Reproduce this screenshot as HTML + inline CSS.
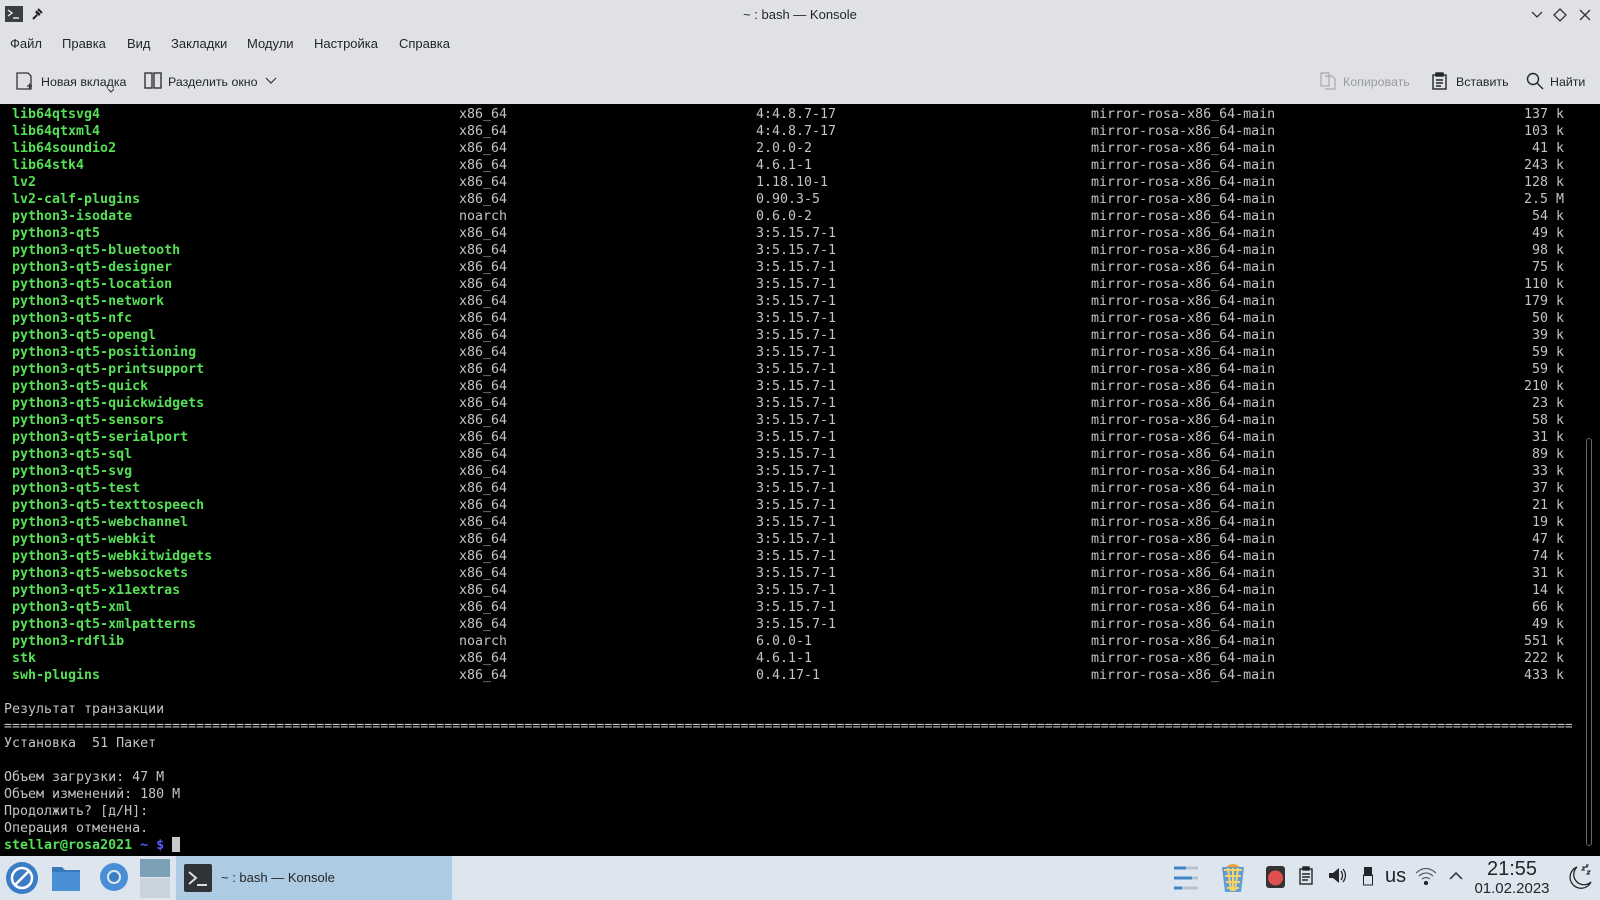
<!DOCTYPE html>
<html><head><meta charset="utf-8"><style>
*{margin:0;padding:0;box-sizing:border-box}
body{width:1600px;height:900px;overflow:hidden;background:#000;font-family:"Liberation Sans","DejaVu Sans",sans-serif;position:relative}
#top{position:absolute;left:0;top:0;width:1600px;height:104px;background:#dfe1e4;color:#232629;font-size:13px}
#top .t{position:absolute}
#term{position:absolute;left:0;top:106px;width:1600px;height:750px;background:#000;font-family:"DejaVu Sans Mono","Liberation Mono",monospace;font-size:13.3px;color:#c4c4c4}
.r{position:absolute;left:0;height:17px;line-height:17px;width:1600px;white-space:pre}
.r span{position:absolute}
.n{left:12px;color:#55e055;font-weight:bold}
.a{left:459px}.v{left:756px}.p{left:1091px}.s{right:36px}
#tb{position:absolute;left:0;top:856px;width:1600px;height:44px;background:#dde6ee}
.tbt{font-size:12.4px}
</style></head><body>
<div style="position:absolute;left:0;top:104px;width:1600px;height:2px;background:#000"></div>
<div id="top">
 <svg class="t" style="left:5px;top:6px" width="18" height="16"><rect width="18" height="16" fill="#3b3f44"/><path d="M3 4l4 3-4 3" stroke="#eee" fill="none" stroke-width="1.4"/><path d="M8 12h6" stroke="#eee" stroke-width="1.4"/></svg>
 <svg class="t" style="left:31px;top:7px" width="13" height="13"><path d="M2 12l4-4M5 4l4 4M7 2l4 4M5 5l3 3" stroke="#222" stroke-width="2"/></svg>
 <div class="t" style="left:0;width:1600px;top:7px;text-align:center;font-size:13px">~ : bash — Konsole</div>
 <svg class="t" style="left:1530px;top:8px" width="64" height="14" fill="none" stroke="#333" stroke-width="1.3"><path d="M2 4l5 5 5-5"/><path d="M30 1l6 6-6 6-6-6z"/><path d="M50 2l10 10M60 2l-10 10"/></svg>
 <div class="t" style="left:10px;top:36px">Файл</div>
 <div class="t" style="left:62px;top:36px">Правка</div>
 <div class="t" style="left:127px;top:36px">Вид</div>
 <div class="t" style="left:171px;top:36px">Закладки</div>
 <div class="t" style="left:247px;top:36px">Модули</div>
 <div class="t" style="left:314px;top:36px">Настройка</div>
 <div class="t" style="left:399px;top:36px">Справка</div>
 <svg class="t" style="left:16px;top:72px" width="18" height="18" fill="none" stroke="#333" stroke-width="1.3"><path d="M1 1h11l3 3v13H1z"/><path d="M11 14h5M13.5 11.5v5"/></svg>
 <div class="t tbt" style="left:41px;top:75px">Новая вкладка</div>
 <svg class="t" style="left:108px;top:89px" width="6" height="4"><path d="M0 0l3 3 3-3" stroke="#333" fill="none"/></svg>
 <svg class="t" style="left:144px;top:72px" width="18" height="17" fill="none" stroke="#333" stroke-width="1.4"><rect x="1" y="1" width="7" height="15"/><rect x="10" y="1" width="7" height="15"/></svg>
 <div class="t tbt" style="left:168px;top:75px">Разделить окно</div>
 <svg class="t" style="left:265px;top:77px" width="12" height="8"><path d="M1 1l5 5 5-5" stroke="#333" fill="none" stroke-width="1.2"/></svg>
 <svg class="t" style="left:1320px;top:72px" width="16" height="18" fill="none" stroke="#aaa" stroke-width="1.2"><path d="M1 1h8v13H1zM5 4h7l3 3v10H5"/></svg>
 <div class="t tbt" style="left:1343px;top:75px;color:#9a9c9e">Копировать</div>
 <svg class="t" style="left:1432px;top:72px" width="15" height="18" fill="none" stroke="#232629" stroke-width="1.4"><rect x="1" y="3" width="13" height="14"/><rect x="4" y="1" width="7" height="3" fill="#232629"/><path d="M4 8h7M4 11h7M4 14h5"/></svg>
 <div class="t tbt" style="left:1456px;top:75px">Вставить</div>
 <svg class="t" style="left:1526px;top:72px" width="18" height="18" fill="none" stroke="#232629" stroke-width="1.4"><circle cx="7" cy="7" r="5.5"/><path d="M11 11l6 6"/></svg>
 <div class="t tbt" style="left:1550px;top:75px">Найти</div>
</div>
<div id="term">
<div class="r" style="top:0"><span class="n">lib64qtsvg4</span><span class="a">x86_64</span><span class="v">4:4.8.7-17</span><span class="p">mirror-rosa-x86_64-main</span><span class="s">137 k</span></div>
<div class="r" style="top:17px"><span class="n">lib64qtxml4</span><span class="a">x86_64</span><span class="v">4:4.8.7-17</span><span class="p">mirror-rosa-x86_64-main</span><span class="s">103 k</span></div>
<div class="r" style="top:34px"><span class="n">lib64soundio2</span><span class="a">x86_64</span><span class="v">2.0.0-2</span><span class="p">mirror-rosa-x86_64-main</span><span class="s">41 k</span></div>
<div class="r" style="top:51px"><span class="n">lib64stk4</span><span class="a">x86_64</span><span class="v">4.6.1-1</span><span class="p">mirror-rosa-x86_64-main</span><span class="s">243 k</span></div>
<div class="r" style="top:68px"><span class="n">lv2</span><span class="a">x86_64</span><span class="v">1.18.10-1</span><span class="p">mirror-rosa-x86_64-main</span><span class="s">128 k</span></div>
<div class="r" style="top:85px"><span class="n">lv2-calf-plugins</span><span class="a">x86_64</span><span class="v">0.90.3-5</span><span class="p">mirror-rosa-x86_64-main</span><span class="s">2.5 M</span></div>
<div class="r" style="top:102px"><span class="n">python3-isodate</span><span class="a">noarch</span><span class="v">0.6.0-2</span><span class="p">mirror-rosa-x86_64-main</span><span class="s">54 k</span></div>
<div class="r" style="top:119px"><span class="n">python3-qt5</span><span class="a">x86_64</span><span class="v">3:5.15.7-1</span><span class="p">mirror-rosa-x86_64-main</span><span class="s">49 k</span></div>
<div class="r" style="top:136px"><span class="n">python3-qt5-bluetooth</span><span class="a">x86_64</span><span class="v">3:5.15.7-1</span><span class="p">mirror-rosa-x86_64-main</span><span class="s">98 k</span></div>
<div class="r" style="top:153px"><span class="n">python3-qt5-designer</span><span class="a">x86_64</span><span class="v">3:5.15.7-1</span><span class="p">mirror-rosa-x86_64-main</span><span class="s">75 k</span></div>
<div class="r" style="top:170px"><span class="n">python3-qt5-location</span><span class="a">x86_64</span><span class="v">3:5.15.7-1</span><span class="p">mirror-rosa-x86_64-main</span><span class="s">110 k</span></div>
<div class="r" style="top:187px"><span class="n">python3-qt5-network</span><span class="a">x86_64</span><span class="v">3:5.15.7-1</span><span class="p">mirror-rosa-x86_64-main</span><span class="s">179 k</span></div>
<div class="r" style="top:204px"><span class="n">python3-qt5-nfc</span><span class="a">x86_64</span><span class="v">3:5.15.7-1</span><span class="p">mirror-rosa-x86_64-main</span><span class="s">50 k</span></div>
<div class="r" style="top:221px"><span class="n">python3-qt5-opengl</span><span class="a">x86_64</span><span class="v">3:5.15.7-1</span><span class="p">mirror-rosa-x86_64-main</span><span class="s">39 k</span></div>
<div class="r" style="top:238px"><span class="n">python3-qt5-positioning</span><span class="a">x86_64</span><span class="v">3:5.15.7-1</span><span class="p">mirror-rosa-x86_64-main</span><span class="s">59 k</span></div>
<div class="r" style="top:255px"><span class="n">python3-qt5-printsupport</span><span class="a">x86_64</span><span class="v">3:5.15.7-1</span><span class="p">mirror-rosa-x86_64-main</span><span class="s">59 k</span></div>
<div class="r" style="top:272px"><span class="n">python3-qt5-quick</span><span class="a">x86_64</span><span class="v">3:5.15.7-1</span><span class="p">mirror-rosa-x86_64-main</span><span class="s">210 k</span></div>
<div class="r" style="top:289px"><span class="n">python3-qt5-quickwidgets</span><span class="a">x86_64</span><span class="v">3:5.15.7-1</span><span class="p">mirror-rosa-x86_64-main</span><span class="s">23 k</span></div>
<div class="r" style="top:306px"><span class="n">python3-qt5-sensors</span><span class="a">x86_64</span><span class="v">3:5.15.7-1</span><span class="p">mirror-rosa-x86_64-main</span><span class="s">58 k</span></div>
<div class="r" style="top:323px"><span class="n">python3-qt5-serialport</span><span class="a">x86_64</span><span class="v">3:5.15.7-1</span><span class="p">mirror-rosa-x86_64-main</span><span class="s">31 k</span></div>
<div class="r" style="top:340px"><span class="n">python3-qt5-sql</span><span class="a">x86_64</span><span class="v">3:5.15.7-1</span><span class="p">mirror-rosa-x86_64-main</span><span class="s">89 k</span></div>
<div class="r" style="top:357px"><span class="n">python3-qt5-svg</span><span class="a">x86_64</span><span class="v">3:5.15.7-1</span><span class="p">mirror-rosa-x86_64-main</span><span class="s">33 k</span></div>
<div class="r" style="top:374px"><span class="n">python3-qt5-test</span><span class="a">x86_64</span><span class="v">3:5.15.7-1</span><span class="p">mirror-rosa-x86_64-main</span><span class="s">37 k</span></div>
<div class="r" style="top:391px"><span class="n">python3-qt5-texttospeech</span><span class="a">x86_64</span><span class="v">3:5.15.7-1</span><span class="p">mirror-rosa-x86_64-main</span><span class="s">21 k</span></div>
<div class="r" style="top:408px"><span class="n">python3-qt5-webchannel</span><span class="a">x86_64</span><span class="v">3:5.15.7-1</span><span class="p">mirror-rosa-x86_64-main</span><span class="s">19 k</span></div>
<div class="r" style="top:425px"><span class="n">python3-qt5-webkit</span><span class="a">x86_64</span><span class="v">3:5.15.7-1</span><span class="p">mirror-rosa-x86_64-main</span><span class="s">47 k</span></div>
<div class="r" style="top:442px"><span class="n">python3-qt5-webkitwidgets</span><span class="a">x86_64</span><span class="v">3:5.15.7-1</span><span class="p">mirror-rosa-x86_64-main</span><span class="s">74 k</span></div>
<div class="r" style="top:459px"><span class="n">python3-qt5-websockets</span><span class="a">x86_64</span><span class="v">3:5.15.7-1</span><span class="p">mirror-rosa-x86_64-main</span><span class="s">31 k</span></div>
<div class="r" style="top:476px"><span class="n">python3-qt5-x11extras</span><span class="a">x86_64</span><span class="v">3:5.15.7-1</span><span class="p">mirror-rosa-x86_64-main</span><span class="s">14 k</span></div>
<div class="r" style="top:493px"><span class="n">python3-qt5-xml</span><span class="a">x86_64</span><span class="v">3:5.15.7-1</span><span class="p">mirror-rosa-x86_64-main</span><span class="s">66 k</span></div>
<div class="r" style="top:510px"><span class="n">python3-qt5-xmlpatterns</span><span class="a">x86_64</span><span class="v">3:5.15.7-1</span><span class="p">mirror-rosa-x86_64-main</span><span class="s">49 k</span></div>
<div class="r" style="top:527px"><span class="n">python3-rdflib</span><span class="a">noarch</span><span class="v">6.0.0-1</span><span class="p">mirror-rosa-x86_64-main</span><span class="s">551 k</span></div>
<div class="r" style="top:544px"><span class="n">stk</span><span class="a">x86_64</span><span class="v">4.6.1-1</span><span class="p">mirror-rosa-x86_64-main</span><span class="s">222 k</span></div>
<div class="r" style="top:561px"><span class="n">swh-plugins</span><span class="a">x86_64</span><span class="v">0.4.17-1</span><span class="p">mirror-rosa-x86_64-main</span><span class="s">433 k</span></div>
<div class="r" style="top:595px;left:4px">Результат транзакции</div>
<div class="r" style="top:612px;left:4px;width:1568px;overflow:hidden">====================================================================================================================================================================================================</div>
<div class="r" style="top:629px;left:4px">Установка  51 Пакет</div>
<div class="r" style="top:663px;left:4px">Объем загрузки: 47 M</div>
<div class="r" style="top:680px;left:4px">Объем изменений: 180 M</div>
<div class="r" style="top:697px;left:4px">Продолжить? [д/Н]:</div>
<div class="r" style="top:714px;left:4px">Операция отменена.</div>
<div class="r" style="top:731px;left:4px;font-weight:bold"><b style="color:#55e055">stellar@rosa2021</b> <b style="color:#5a5aff">~ $</b> <i style="display:inline-block;width:8px;height:15px;background:#c8c8c8;vertical-align:-3px"></i></div>
<div style="position:absolute;left:1586px;top:332px;width:6px;height:408px;border:1px solid #666;border-radius:3px"></div>
</div>
<div id="tb">
 <svg style="position:absolute;left:5px;top:5px" width="34" height="34"><circle cx="17" cy="17" r="16" fill="#3b7cc4"/><circle cx="17" cy="17" r="10" fill="none" stroke="#fff" stroke-width="2.5"/><path d="M10 24L24 10" stroke="#fff" stroke-width="2.5"/></svg>
 <svg style="position:absolute;left:51px;top:8px" width="30" height="28"><path d="M1 3h10l3 3h15v21H1z" fill="#3a78bd"/><rect x="1" y="8" width="28" height="19" fill="#4a8ed4"/></svg>
 <svg style="position:absolute;left:99px;top:6px" width="30" height="30"><circle cx="15" cy="15" r="14" fill="#4a8fd6"/><circle cx="15" cy="15" r="7" fill="#dde6ee"/><circle cx="15" cy="15" r="5" fill="#3a7cc4"/></svg>
 <div style="position:absolute;left:140px;top:3px;width:30px;height:18px;background:#7c9fb8"></div>
 <div style="position:absolute;left:140px;top:22px;width:30px;height:20px;background:#c9d3dc"></div>
 <div style="position:absolute;left:176px;top:0;width:276px;height:44px;background:#aecbe4"></div>
 <svg style="position:absolute;left:184px;top:8px" width="28" height="28"><rect width="28" height="28" rx="2" fill="#2f3236"/><path d="M5 8l7 6-7 6" stroke="#ddd" fill="none" stroke-width="2"/><path d="M13 21h10" stroke="#ddd" stroke-width="2"/></svg>
 <div style="position:absolute;left:221px;top:14px;font-size:13px;color:#232629">~ : bash — Konsole</div>
 <svg style="position:absolute;left:1172px;top:7px" width="26" height="28"><g stroke-width="3"><path d="M2 5h24M2 15h24M2 25h24" stroke="#b8c2cc"/><path d="M2 5h12M2 15h18M2 25h8" stroke="#3f84c8"/></g></svg>
 <svg style="position:absolute;left:1220px;top:5px" width="26" height="32"><path d="M2 6h22l-3 25H5z" fill="#5e9bd8"/><path d="M4 9h18M5 15h16M6 21h14M7 27h12M8 7l3 23M13 7v23M18 7l-3 23" stroke="#f5d46a" stroke-width="2"/><path d="M6 6q7-6 14 0" fill="#f0a030"/></svg>
 <svg style="position:absolute;left:1266px;top:10px" width="19" height="22"><rect width="19" height="22" rx="3" fill="#333"/><circle cx="9.5" cy="12" r="7.5" fill="#e05050"/></svg>
 <svg style="position:absolute;left:1299px;top:10px" width="14" height="19" fill="none" stroke="#232629" stroke-width="1.4"><rect x="1" y="3" width="12" height="15"/><rect x="4" y="1" width="6" height="3" fill="#232629"/><path d="M3 8h8M3 11h8M3 14h6"/></svg>
 <svg style="position:absolute;left:1328px;top:11px" width="18" height="17"><path d="M1 6h4l6-5v15l-6-5H1z" fill="#232629"/><path d="M13 4q3 4.5 0 9M15 2q5 6.5 0 13" stroke="#232629" fill="none" stroke-width="1.3"/></svg>
 <svg style="position:absolute;left:1363px;top:10px" width="10" height="20"><rect x="1" y="1" width="8" height="9" fill="#232629"/><rect x="0.5" y="9" width="9" height="10" fill="none" stroke="#232629"/></svg>
 <div style="position:absolute;left:1385px;top:9px;font-size:20px;color:#232629">us</div>
 <svg style="position:absolute;left:1415px;top:10px" width="22" height="20" fill="none" stroke="#232629" stroke-width="1.3"><path d="M1 7q10-9 20 0M4 10q7-6 14 0M7 13q4-3 8 0" opacity=".7"/><circle cx="11" cy="17" r="1.5" fill="#232629"/></svg>
 <svg style="position:absolute;left:1449px;top:15px" width="14" height="9"><path d="M1 8l6-6 6 6" stroke="#232629" fill="none" stroke-width="1.4"/></svg>
 <div style="position:absolute;left:1472px;top:2px;width:80px;text-align:center;font-size:20px;color:#232629;line-height:22px">21:55</div>
 <div style="position:absolute;left:1472px;top:23px;width:80px;text-align:center;font-size:15px;color:#232629;line-height:20px">01.02.2023</div>
 <svg style="position:absolute;left:1566px;top:7px" width="28" height="30" fill="none" stroke="#232629" stroke-width="1.3"><path d="M11 4a11 11 0 1 0 14 15a10 10 0 0 1-14-15z"/><path d="M16 4h3l-3 3h3M21 8h3l-3 3h3M20 2h2l-2 2h2" stroke-width="1"/></svg>
</div>
</body></html>
